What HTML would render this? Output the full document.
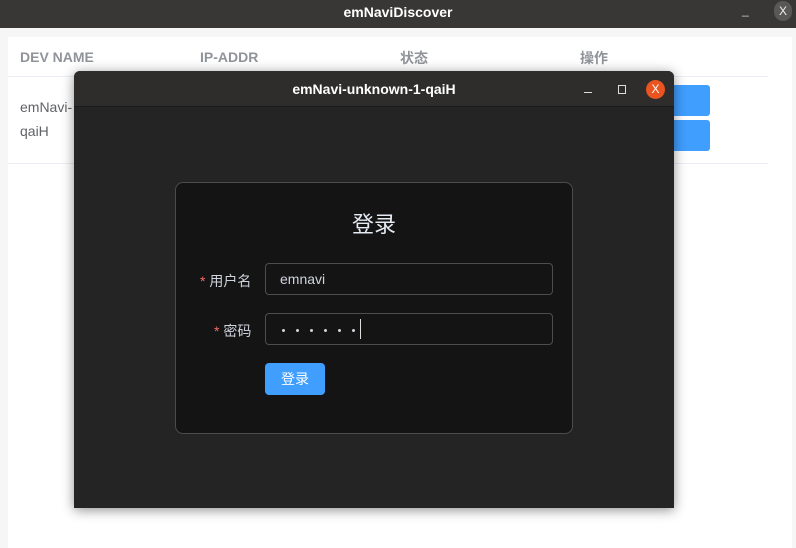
<!DOCTYPE html><html><head><meta charset="utf-8"><style>
*{margin:0;padding:0;box-sizing:border-box}
body{width:796px;height:548px;overflow:hidden;background:#f6f6f6;font-family:"Liberation Sans","Noto Sans CJK SC",sans-serif;position:relative}
.a{position:absolute}
.d{position:absolute;top:15px;width:3px;height:3px;border-radius:2px;background:#cfd3dc}
</style></head><body>
<div class="a" style="left:0;top:0;width:796px;height:28px;background:#393735;color:#fff;font-weight:bold;font-size:14px;text-align:center;line-height:24px">emNaviDiscover</div>
<div class="a" style="left:742px;top:3px;color:#ccc;font-size:12px">_</div>
<div class="a" style="left:774px;top:1px;width:18px;height:20px;border-radius:9px;background:#5a5856;color:#eee;font-size:12px;text-align:center;line-height:20px">X</div>
<div class="a" style="left:8px;top:37px;width:784px;height:511px;background:#fff"></div>
<div class="a" style="left:20px;top:49px;color:#909399;font-weight:bold;font-size:14px">DEV NAME</div>
<div class="a" style="left:200px;top:49px;color:#909399;font-weight:bold;font-size:14px">IP-ADDR</div>
<div class="a" style="left:400px;top:48px;color:#909399;font-weight:bold;font-size:14px">状态</div>
<div class="a" style="left:580px;top:48px;color:#909399;font-weight:bold;font-size:14px">操作</div>
<div class="a" style="left:8px;top:76px;width:760px;height:1px;background:#ebeef5"></div>
<div class="a" style="left:8px;top:163px;width:760px;height:1px;background:#ebeef5"></div>
<div class="a" style="left:20px;top:95px;color:#606266;font-size:14px;line-height:24px">emNavi-<br>qaiH</div>
<div class="a" style="left:640px;top:85px;width:70px;height:31px;background:#409eff;border-radius:3px"></div>
<div class="a" style="left:640px;top:120px;width:70px;height:31px;background:#409eff;border-radius:3px"></div>
<div class="a" style="left:74px;top:71px;width:600px;height:437px;background:#242424;border-radius:6px 6px 0 0;box-shadow:0 2px 12px rgba(0,0,0,.45)"></div>
<div class="a" style="left:74px;top:71px;width:600px;height:36px;background:#2e2d2c;border-radius:6px 6px 0 0;border-bottom:1px solid #1a1a1a;color:#fff;font-weight:bold;font-size:14px;text-align:center;line-height:37px">emNavi-unknown-1-qaiH</div>
<div class="a" style="left:584px;top:92px;width:8px;height:1px;background:#ddd"></div>
<div class="a" style="left:618px;top:85px;width:8px;height:9px;border:1px solid #ddd"></div>
<div class="a" style="left:646px;top:80px;width:19px;height:19px;border-radius:10px;background:#e95420;color:#fff;font-size:12px;text-align:center;line-height:19px">X</div>
<div class="a" style="left:175px;top:182px;width:398px;height:252px;background:#141414;border:1px solid #4c4c4c;border-radius:8px"></div>
<div class="a" style="left:174px;top:207px;width:400px;text-align:center;color:#e5eaf3;font-size:22px">登录</div>
<div class="a" style="left:200px;top:271px;color:#cfd3dc;font-size:14px"><span style="color:#f56c6c">* </span>用户名</div>
<div class="a" style="left:214px;top:321px;color:#cfd3dc;font-size:14px"><span style="color:#f56c6c">* </span>密码</div>
<div class="a" style="left:265px;top:263px;width:288px;height:32px;border:1px solid #4c4d4f;border-radius:4px;color:#cfd3dc;font-size:14px;line-height:30px;padding-left:14px">emnavi</div>
<div class="a" style="left:265px;top:313px;width:288px;height:32px;border:1px solid #4c4d4f;border-radius:4px">
<div class="d" style="left:16px"></div><div class="d" style="left:30px"></div><div class="d" style="left:44px"></div><div class="d" style="left:58px"></div><div class="d" style="left:72px"></div><div class="d" style="left:86px"></div>
<div class="a" style="left:94px;top:5px;width:1px;height:20px;background:#ddd"></div></div>
<div class="a" style="left:265px;top:363px;width:60px;height:32px;background:#409eff;border-radius:4px;color:#fff;font-size:14px;text-align:center;line-height:32px">登录</div>
</body></html>
